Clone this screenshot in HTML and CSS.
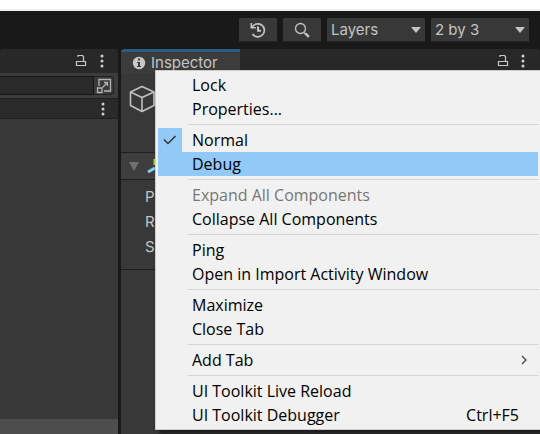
FILE: index.html
```html
<!DOCTYPE html>
<html lang="en">
<head>
<meta charset="utf-8">
<title>Editor</title>
<link rel="stylesheet" href="styles.css">
</head>
<body>
<svg class="defs" aria-hidden="true">
  <symbol id="lock" viewBox="0 0 12 14">
    <path d="M1.500 7.500h9v4h-9zM3 3V1.500h4.500l1 1V7" fill="none" stroke="#c8c8c8" stroke-width="1.200"/>
  </symbol>
  <symbol id="dots" viewBox="0 0 4 14">
    <circle cx="2" cy="2" r="1.500" fill="#d0d0d0"/><circle cx="2" cy="7" r="1.500" fill="#d0d0d0"/><circle cx="2" cy="12" r="1.500" fill="#d0d0d0"/>
  </symbol>
</svg>
<div class="titlebar"></div>
<header class="toolbar">
  <button class="tool" aria-label="History">
    <svg width="16" height="16" viewBox="0 0 16 16" fill="none" stroke="#c4c4c4"><path d="M2 5.500A6.500 6.500 0 1 1 2.500 12" stroke-width="1.700"/><path d="M1.300 1v4.800h4.500" stroke-width="1.600"/><path d="M8 4.500v4.200h3" stroke-width="2"/></svg>
  </button>
  <button class="tool" aria-label="Search">
    <svg width="16" height="16" viewBox="0 0 16 16" fill="none" stroke="#c4c4c4"><circle cx="6.500" cy="6.500" r="5" stroke-width="1.300"/><path d="M10 10.500l1.500 1.500" stroke-width="1.300"/><path d="M11.300 11.300l3.500 3.500" stroke-width="2.500"/></svg>
  </button>
  <div class="dropdown"><select aria-label="Layers"><option>Layers</option></select><svg class="arrow" viewBox="0 0 10 6"><path d="M0 0h10L5 6z"/></svg></div>
  <div class="dropdown"><select aria-label="Layout"><option>2 by 3</option></select><svg class="arrow" viewBox="0 0 10 6"><path d="M0 0h10L5 6z"/></svg></div>
</header>
<main class="workspace">
  <section class="side">
    <div class="tabs">
      <button class="icon" aria-label="Lock hierarchy"><svg width="12" height="14"><use href="#lock"/></svg></button>
      <button class="icon" aria-label="Hierarchy options"><svg width="4" height="14"><use href="#dots"/></svg></button>
    </div>
    <div class="filter">
      <input type="text" aria-label="Filter">
      <button class="picker" aria-label="Open search">
        <svg width="16" height="16" viewBox="0 0 16 16" fill="none" stroke="#b4b4b4" stroke-width="1.300"><path d="M3 8V1.500h11.500V13H8"/><path d="M1.500 10h4.500v4.500H1.500z"/><path d="M6.500 9.500l5-5M8 4.500h3.500V8"/></svg>
      </button>
    </div>
    <div class="scene"><button class="icon" aria-label="Scene options"><svg width="4" height="14"><use href="#dots"/></svg></button></div>
    <div class="tree"></div>
    <div class="selection"></div>
  </section>
  <section class="inspector">
    <div class="tabs">
      <div class="tab">
        <svg width="14" height="14" viewBox="0 0 14 14"><circle cx="7" cy="7" r="6.200" fill="#c8c8c8"/><path d="M6 2.500h2v2H6zM5 6h3v4h1v1H5v-1h1V7H5z" fill="#3c3c3c"/></svg>
        <span>Inspector</span>
      </div>
      <button class="icon push" aria-label="Lock inspector"><svg width="12" height="14"><use href="#lock"/></svg></button>
      <button class="icon" aria-label="Inspector options"><svg width="4" height="14"><use href="#dots"/></svg></button>
    </div>
    <div class="object">
      <svg width="26" height="28" viewBox="0 0 26 28" fill="none" stroke="#c0c0c0" stroke-width="1.600" stroke-linejoin="round"><path d="M13 1.500L25 7v13.500L13 26.500 1.500 20.500V7zM1.500 7L13 12.500 25 7M13 12.500v14"/></svg>
    </div>
    <div class="component">
      <svg width="10" height="9" viewBox="0 0 10 9"><path d="M0 0h10L5 9z" fill="#707070"/></svg>
      <svg width="16" height="18" viewBox="0 0 16 18" fill="none" stroke-width="3"><path d="M8 8V2" stroke="#a4d34a"/><path d="M8 11l-7 4" stroke="#7fd0f5"/><path d="M9 11l6 4" stroke="#e07050"/></svg>
    </div>
    <div class="fields"><div>P</div><div>R</div><div>S</div></div>
    <div class="rest"></div>
  </section>
</main>
<div class="menu" role="menu">
  <button role="menuitem">Lock</button>
  <button role="menuitem">Properties...</button>
  <hr>
  <button role="menuitemcheckbox" aria-checked="true"><i class="check"><svg width="14" height="10" viewBox="0 0 14 10"><path d="M1 4.500l4 4L12.500 1" fill="none" stroke="#333" stroke-width="1.500"/></svg></i>Normal</button>
  <button role="menuitem" class="active">Debug</button>
  <hr>
  <button role="menuitem" disabled>Expand All Components</button>
  <button role="menuitem">Collapse All Components</button>
  <hr>
  <button role="menuitem">Ping</button>
  <button role="menuitem">Open in Import Activity Window</button>
  <hr>
  <button role="menuitem">Maximize</button>
  <button role="menuitem">Close Tab</button>
  <hr>
  <button role="menuitem">Add Tab<svg class="more" width="6" height="10" viewBox="0 0 6 10"><path d="M1 1l4 4-4 4" fill="none" stroke="#444" stroke-width="1.300"/></svg></button>
  <hr>
  <button role="menuitem">UI Toolkit Live Reload</button>
  <button role="menuitem">UI Toolkit Debugger<kbd>Ctrl+F5</kbd></button>
</div>
</body>
</html>
```
FILE: styles.css
```css
* { box-sizing: border-box; }
body {
  margin: 0;
  min-height: 100vh;
  display: flex;
  flex-direction: column;
  position: relative;
  overflow: hidden;
  background: #191919;
  color: #c4c4c4;
  font: 15px/20px Inter, sans-serif;
}
button, select, input { font: inherit; color: inherit; border: 0; margin: 0; padding: 0; background: none; }
svg { display: block; flex: none; }
.defs { position: absolute; width: 0; height: 0; }

.titlebar { height: 11px; background: #fff; border-bottom: 2px solid #eef1f1; }
.toolbar { height: 38px; padding: 0 11px; display: flex; align-items: center; justify-content: flex-end; gap: 6px; }
.tool, .dropdown { height: 24px; background: #383838; border-radius: 1px; border-bottom: 1px solid #242424; }
.tool { width: 38px; display: flex; align-items: center; justify-content: center; }
.dropdown { width: 98px; display: grid; align-items: center; }
.dropdown select { grid-area: 1 / 1; width: 100%; padding-left: 4px; appearance: none; }
.arrow { grid-area: 1 / 1; justify-self: end; width: 10px; height: 6px; margin-right: 4px; fill: #c4c4c4; pointer-events: none; }

.workspace { flex: 1; display: grid; grid-template-columns: 118px 1fr; gap: 3px; }
.side, .inspector { display: flex; flex-direction: column; background: #383838; border-radius: 4px 4px 0 0; overflow: hidden; }
.tabs { display: flex; align-items: center; height: 24px; background: #282828; }
.icon { display: flex; align-items: center; justify-content: center; width: 20px; }
.side .tabs { justify-content: flex-end; padding-right: 6px; gap: 1px; }
.filter { display: flex; height: 25px; padding: 3px 4px 3px 0; background: #3c3c3c; }
.filter input { flex: 1; min-width: 0; background: #2a2a2a; border: solid #151515; border-width: 1px 1px 1px 0; }
.picker { width: 20px; display: flex; align-items: center; justify-content: center; background: #3a3a3a; border: 1px solid #222; border-left: 0; border-radius: 0 4px 4px 0; }
.scene { height: 21px; display: flex; justify-content: flex-end; align-items: center; padding-right: 5px; background: #2a2a2a; border: solid #1f1f1f; border-width: 1px 0; }
.tree { flex: 1; }
.selection { height: 15px; background: #4d4d4d; }

.inspector .tabs { padding-right: 7px; }
.tab { display: flex; align-items: center; gap: 5px; width: 119px; height: 100%; padding-left: 11px; background: #3c3c3c; border-top: 3px solid #2c5d87; }
.push { margin-left: auto; }
.object { height: 79px; padding: 12px 8px; }
.component { height: 28px; display: flex; align-items: center; gap: 8px; padding-left: 8px; background: #3e3e3e; border: solid #1f1f1f; border-width: 1px 0; }
.fields { height: 90px; padding: 4px 24px; line-height: 25px; border-bottom: 1px solid #1f1f1f; }
.rest { flex: 1; }

.menu {
  position: absolute;
  top: 70px;
  left: 155px;
  right: -1px;
  padding: 2px;
  display: flex;
  flex-direction: column;
  background: #f1f1f1;
  border: 1px solid #ccc;
  box-shadow: 4px 4px 4px rgba(0, 0, 0, .5);
  color: #000;
  font: 16px/24px "Open Sans", "Noto Sans", sans-serif;
}
.menu button { height: 24px; display: flex; align-items: center; padding: 0 19px 0 34px; text-align: left; position: relative; }
.menu .active { background: #91c9f7; }
.menu button:disabled { color: #777; }
.menu hr { width: auto; height: 1px; margin: 3px 0 3px 30px; border: 0; background: #d4d4d4; }
.check { position: absolute; left: 0; top: 0; width: 24px; height: 24px; display: grid; place-items: center; background: #91c9f7; }
.more { margin-left: auto; margin-right: -8px; }
.menu kbd { margin-left: auto; font: inherit; }
```
